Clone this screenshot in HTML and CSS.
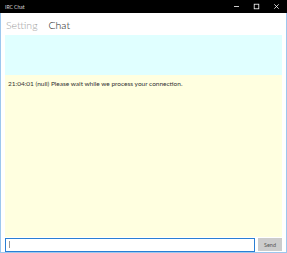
FILE: index.html
```html
<!DOCTYPE html>
<html lang="en">
<head>
    <meta charset="UTF-8" />
    <title>IRC Chat</title>
    <link rel="stylesheet" href="styles.css">
</head>
<body>
    <div class="window">
        <header class="titlebar">
            <div class="title">IRC Chat</div>
            <div class="controls">
                <svg class="ctl" width="7" height="7" viewBox="0 0 7 7"><path d="M1 3.5h5" stroke="#fff" stroke-width="0.8"/></svg>
                <svg class="ctl" width="7" height="7" viewBox="0 0 7 7"><rect x="1.2" y="1.2" width="4.6" height="4.6" fill="none" stroke="#fff" stroke-width="0.8"/></svg>
                <svg class="ctl" width="7" height="7" viewBox="0 0 7 7"><path d="M1.3 1.3l4.4 4.4M5.7 1.3l-4.4 4.4" stroke="#fff" stroke-width="0.8"/></svg>
            </div>
        </header>

        <nav class="tabs">
            <span class="tab">Setting</span>
            <span class="tab active">Chat</span>
        </nav>

        <section class="panel-top"></section>

        <section class="log">
            <p>21:04:01 (null) Please wait while we process your connection.</p>
        </section>

        <div class="input-row">
            <div class="text-input"><span class="caret"></span></div>
            <button class="send">Send</button>
        </div>
    </div>
</body>
</html>
```

FILE: styles.css
```css
* {
    margin: 0;
    padding: 0;
    box-sizing: border-box;
}

body {
    font-family: 'Lato', 'Open Sans', sans-serif;
    background: #fff;
}

.window {
    width: 287px;
    height: 253px;
    display: flex;
    flex-direction: column;
    border-left: 1px solid #9cc7ee;
    border-right: 1px solid #9cc7ee;
    border-bottom: 1px solid #9cc7ee;
}

.titlebar {
    height: 13px;
    margin: 0 -1px;
    background: #000;
    display: flex;
    align-items: center;
    justify-content: space-between;
    padding: 0 7px 0 5px;
}

.title {
    color: #ddd;
    font-size: 5px;
}

.controls {
    display: flex;
    gap: 13px;
}

.tabs {
    height: 22px;
    display: flex;
    align-items: flex-end;
    gap: 11px;
    padding: 0 0 5px 5px;
}

.tab {
    font-size: 10.5px;
    font-weight: 300;
    color: #a0a0a0;
    line-height: 1;
}

.tab.active {
    color: #111;
}

.panel-top {
    height: 40px;
    margin: 0 4px;
    background: #e0ffff;
}

.log {
    flex: 1;
    margin: 0 4px;
    background: #ffffe0;
    padding: 5px 3px;
}

.log p {
    font-size: 6.5px;
    color: #333;
}

.input-row {
    display: flex;
    gap: 3px;
    padding: 1px 4px 0 4px;
    height: 15px;
}

.text-input {
    flex: 1;
    height: 14px;
    border: 1.5px solid #2a7fd4;
    background: #fff;
    padding: 2px 3px;
}

.caret {
    display: block;
    width: 1px;
    height: 7px;
    background: #999;
}

.send {
    width: 24px;
    height: 13px;
    border: none;
    background: #cccccc;
    color: #555;
    font-family: 'Lato', sans-serif;
    font-size: 5.5px;
}
```
